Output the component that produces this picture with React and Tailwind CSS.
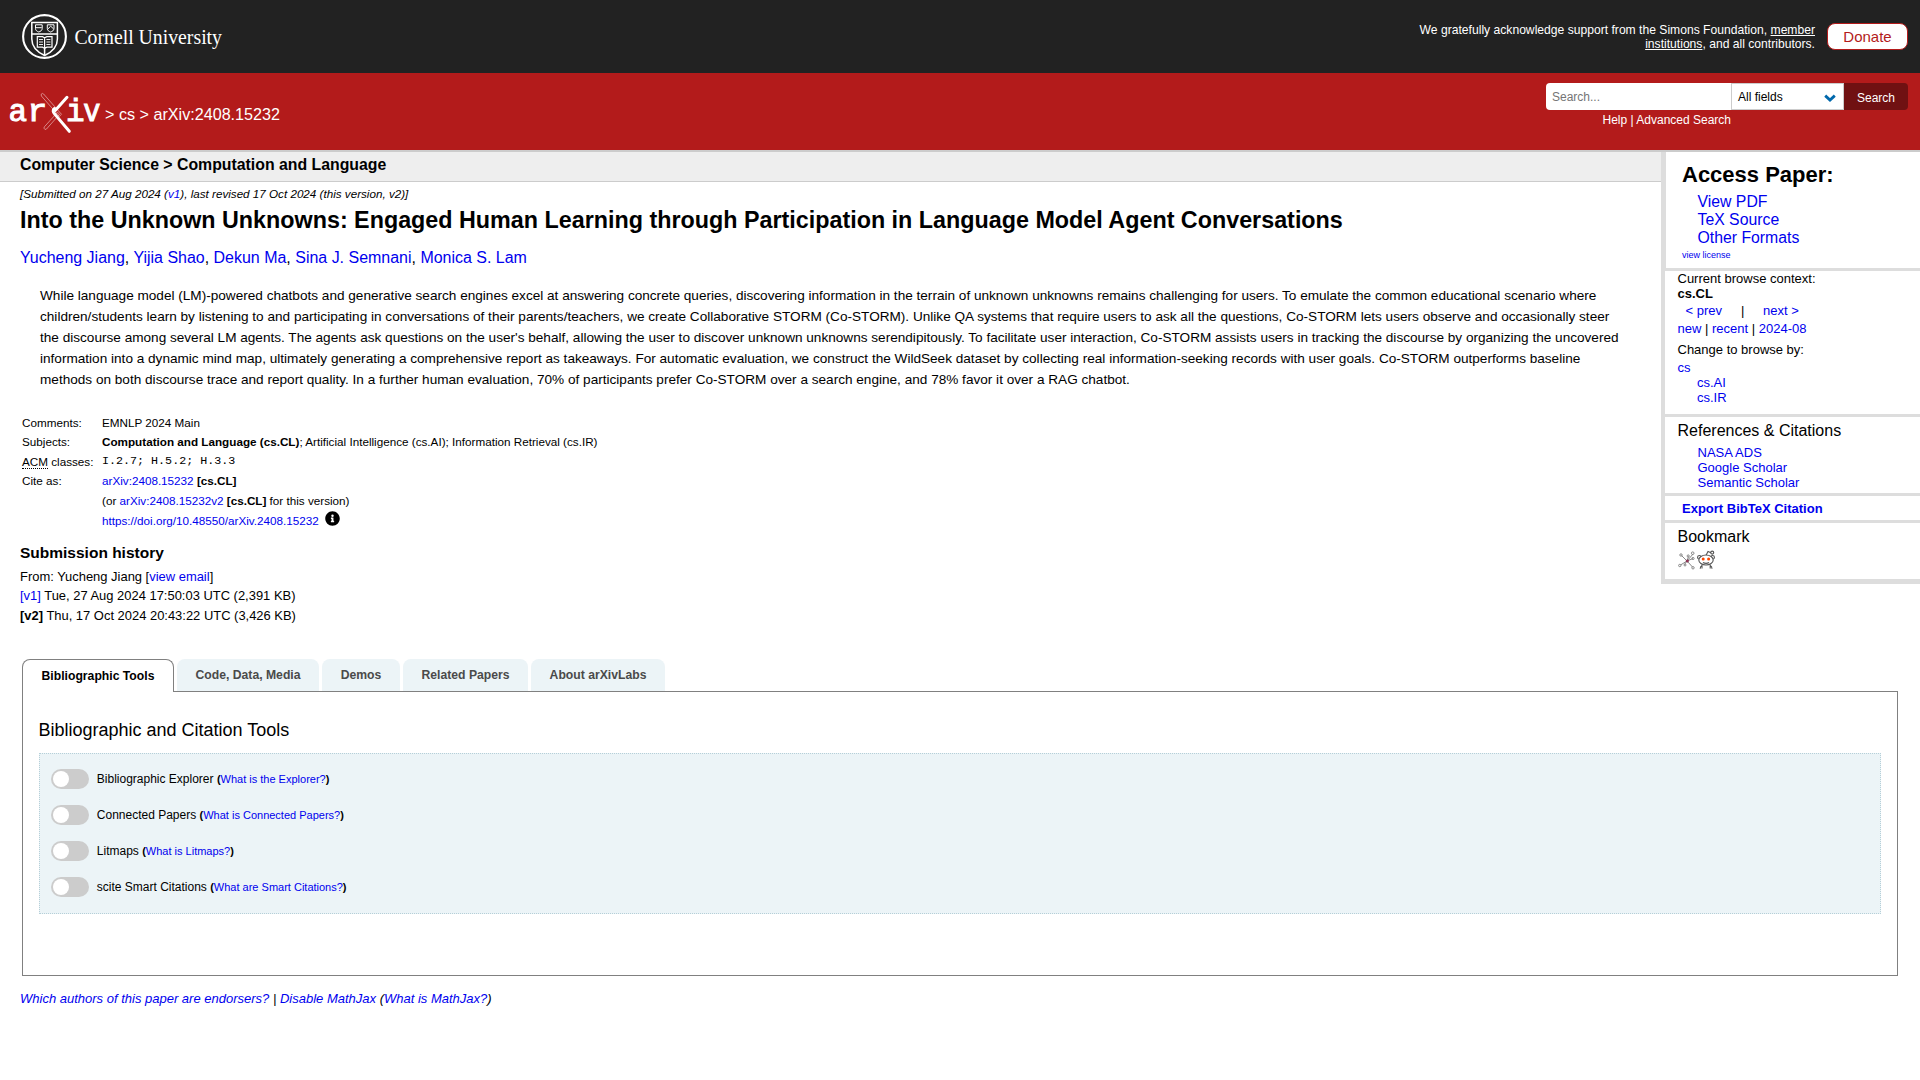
import React from "react";

const A = ({ children, className = "" }) => (
  <a href="#" className={"text-[#0000ee] " + className}>{children}</a>
);

const CornellLogo = () => (
  <svg width="204" height="50" viewBox="0 0 204 50" className="block overflow-visible">
    <g fill="none" stroke="#fff">
      <circle cx="22.5" cy="25.5" r="21.4" strokeWidth="2.1" />
      <path d="M9.8 11.5H35.4V28C35.4 36.5 29 41.5 22.6 44.5C16.2 41.5 9.8 36.5 9.8 28Z" strokeWidth="1.5" />
      <path d="M9.8 22.9H35.4M22.6 37V44" strokeWidth="1.5" />
      <path d="M13.5 13.8H20.2V17.5C20.2 19.6 18.3 20.4 16.8 21C15.2 20.4 13.5 19.6 13.5 17.5ZM25.3 13.8H32V17.5C32 19.6 30.2 20.4 28.6 21C27 20.4 25.3 19.6 25.3 17.5Z" strokeWidth="1" />
      <path d="M13.8 16.7H19.7M25.8 18L28.7 15.2L31.7 18" strokeWidth="1" />
      <path d="M15.3 25.7H20.5L22.6 26.8L24.9 25.7H30V36.2H24.9L22.6 37.4L20.5 36.2H15.3ZM22.6 26.8V37.4" strokeWidth="1.2" />
      <path d="M17 28.5H21M17 31H21M17 33.5H21M24.4 28.5H28.4M24.4 31H28.4M24.4 33.5H28.4" strokeWidth="0.9" />
    </g>
    <text x="52.4" y="32.5" fill="#fff" fontFamily="Liberation Serif, serif" fontSize="21.5" textLength="147.6" lengthAdjust="spacingAndGlyphs">Cornell University</text>
  </svg>
);

const ArxivLogo = () => (
  <svg width="92" height="42" viewBox="0 0 92 42" className="block overflow-visible">
    <g fill="#fff" stroke="#fff" strokeWidth="1" fontFamily="Liberation Mono, monospace" fontSize="31">
      <text x="-0.6" y="28.9" textLength="18.6" lengthAdjust="spacingAndGlyphs">a</text>
      <text x="18.4" y="28.9" textLength="19.8" lengthAdjust="spacingAndGlyphs">r</text>
      <text x="57" y="28.9">i</text>
      <text x="74.2" y="28.9" textLength="17.2" lengthAdjust="spacingAndGlyphs">v</text>
    </g>
    <path d="M32.2 2.2L33.6 1.4L34.6 2L52.5 22.3L50.4 24.4L32.4 4Z" fill="none" stroke="#e8b4b4" strokeWidth="0.7" />
    <path d="M36 37.5L34.9 36.1L35.4 34.8L48.5 20.3L50.6 22.2L37.5 37Z" fill="none" stroke="#e8b4b4" strokeWidth="0.7" />
    <path d="M58 5.3L46.2 18.4" stroke="#fff" strokeWidth="3" strokeLinecap="round" />
    <path d="M45.5 16.5C43.5 18 43.8 20 46 22.4L60.3 39.3" fill="none" stroke="#fff" strokeWidth="3" strokeLinecap="round" />
  </svg>
);

const Toggle = ({ label, link }) => (
  <div className="flex h-9 items-center">
    <span className="flex h-5 w-[38px] items-center rounded-full bg-[#ccc] pl-0.5">
      <span className="size-4 rounded-full bg-white" />
    </span>
    <span className="ml-[7.8px] text-xs leading-5">
      {label} <span className="text-[11px]"><b>(</b><A>{link}</A><b>)</b></span>
    </span>
  </div>
);

const tabs = ["Code, Data, Media", "Demos", "Related Papers", "About arXivLabs"];
const tabWidths = ["w-[142px]", "w-[78px]", "w-[125px]", "w-[134px]"];

const Header = () => (
  <header>
    <div className="flex h-[73px] items-start justify-between bg-[#222] pl-[22px] pr-3 text-white">
      <div className="pt-[11px]"><CornellLogo /></div>
      <div className="flex">
        <p className="mr-3 mt-[23px] w-[420px] text-right text-[12.13px] leading-[14px]">
          We gratefully acknowledge support from the Simons Foundation, <u>member institutions</u>, and all contributors.
        </p>
        <a href="#" className="mt-[23px] flex h-[27px] w-[81px] items-center justify-center rounded-lg border border-[#b31b1b] bg-white text-[15px] leading-[25px] text-[#b31b1b]">
          Donate
        </a>
      </div>
    </div>
    <div className="flex h-[79px] justify-between border-b-2 border-[#ccc] bg-[#b31b1b] pl-[9px] pr-3 text-white">
      <div className="flex">
        <div className="mt-[19px]"><ArxivLogo /></div>
        <div className="ml-1 mt-[32px] text-[16.15px] leading-[18px]">&gt; cs &gt; arXiv:2408.15232</div>
      </div>
      <div className="mt-[10px] w-[362px] text-xs">
        <div className="flex h-[27px]">
          <div className="w-[185px] rounded-l-sm bg-white pl-1.5 pt-px leading-[27px] text-[#757575]">Search...</div>
          <div className="flex w-[113px] items-center justify-between border border-[#ccc] bg-white pl-1.5 pr-[7px] text-black">
            <span className="pt-px leading-[25px]">All fields</span>
            <svg width="12" height="8" viewBox="0 0 12 8" className="mt-0.5"><path d="M1.2 1.6L6 6L10.8 1.6" fill="none" stroke="#0068ac" strokeWidth="2.8" /></svg>
          </div>
          <div className="w-16 rounded-r-sm bg-[#701112] pt-0.5 text-center leading-[27px]">Search</div>
        </div>
        <div className="pl-[56.5px] pt-px leading-[19px]">Help | Advanced Search</div>
      </div>
    </div>
  </header>
);

const Sidebar = () => (
  <aside className="h-[432px] w-[259px] border-b-[5px] border-l-4 border-[#ddd] text-[13px] leading-[15px]">
    <section className="h-[116px] border-l border-[#ddd] pl-4 pt-[10px]">
      <h2 className="text-[22px] font-bold leading-[26px]">Access Paper:</h2>
      <ul className="ml-[15.5px] mt-[5px] text-[15.8px] leading-[18px]">
        <li><A>View PDF</A></li><li><A>TeX Source</A></li><li><A>Other Formats</A></li>
      </ul>
      <div className="mt-[3px] text-[9px] leading-[10px]"><A>view license</A></div>
    </section>
    <section className="h-[146px] border-t-[3px] border-[#ddd] pl-[12.5px]">
      <div className="leading-[15px]">Current browse context:</div>
      <div className="font-bold leading-[15px]">cs.CL</div>
      <div className="mt-px flex leading-[17px]"><A className="ml-2 w-[55.5px]">&lt; prev</A><span className="w-[22px]">|</span><A>next &gt;</A></div>
      <div className="mt-px leading-[18px]"><A>new</A> | <A>recent</A> | <A>2024-08</A></div>
      <div className="mt-1 leading-[15px]">Change to browse by:</div>
      <div className="mt-[3px]"><A>cs</A></div>
      <div className="ml-[19.5px]"><A>cs.AI</A></div>
      <div className="ml-[19.5px]"><A>cs.IR</A></div>
    </section>
    <section className="h-[79px] border-t-[3px] border-[#ddd] pl-[12.5px] pt-[5px]">
      <h3 className="text-base leading-[18px]">References &amp; Citations</h3>
      <ul className="ml-5 mt-[5px]">
        <li><A>NASA ADS</A></li><li><A>Google Scholar</A></li><li><A>Semantic Scholar</A></li>
      </ul>
    </section>
    <section className="h-[27px] border-t-[3px] border-[#ddd] pl-[17px] pt-[5px] font-bold"><A>Export BibTeX Citation</A></section>
    <section className="h-[59px] border-t-[3px] border-[#ddd] pl-[12.5px] pt-[5px]">
      <h3 className="text-base leading-[18px]">Bookmark</h3>
      <div className="mt-1 flex gap-px">
        <svg width="18" height="20" viewBox="0 0 18 20" fill="none" stroke="#888" strokeWidth="1">
          <path d="M3.5 5.5L9 11L15 4M9 11L14.5 17M9 11L2.5 15M9 11L6.5 14.5M9 11L10.5 6.5M9 11L15 8.5" strokeWidth="1" />
          <circle cx="3" cy="5" r="1.2" /><circle cx="14.7" cy="3.2" r="1.3" /><circle cx="10.2" cy="6" r="1.1" /><circle cx="15" cy="8.5" r="1.1" />
          <circle cx="1.8" cy="15.5" r="1.2" /><circle cx="7" cy="15" r="1" /><circle cx="15" cy="17.8" r="1.2" />
          <circle cx="9.3" cy="11" r="1.1" fill="#b0305a" stroke="#803050" />
        </svg>
        <svg width="19" height="20" viewBox="0 0 19 20" fill="none" stroke="#555" strokeWidth="1.1">
          <ellipse cx="9" cy="10" rx="7.2" ry="5" fill="#fff" />
          <path d="M1.8 9C0 8.5 .3 5.6 2.2 5.5C3 5.4 3.6 6 3.8 6.5M16.2 9C18 8.5 17.7 5.6 15.8 5.5C15 5.4 14.4 6 14.2 6.5" />
          <path d="M9.2 5L11 1.5L14 2.7" /><circle cx="15.2" cy="2.6" r="1.5" />
          <path d="M6 12.5C8 13.6 10.2 13.6 12 12.5M5 14.5V18.5M13.2 14.5V18.5M3.2 18.8C3.2 16.8 4 16 5 15.5M15 18.8C15 16.8 14.2 16 13.2 15.5" />
          <circle cx="6.2" cy="9" r="1.5" fill="#ff4500" stroke="none" /><circle cx="11.6" cy="9" r="1.5" fill="#ff4500" stroke="none" />
        </svg>
      </div>
    </section>
  </aside>
);

const Row = ({ label, children }) => (
  <div className="flex h-[19.6px] items-center leading-[19px]">
    <div className="w-20">{label}</div>
    <div>{children}</div>
  </div>
);

const Article = () => (
  <main className="w-[1661px]">
    <div className="h-[30px] border-b border-[#ccc] bg-[#eee] pl-5 text-[15.84px] font-bold leading-[25px]">Computer Science &gt; Computation and Language</div>
    <div className="pl-5">
      <div className="text-[11.66px] italic leading-[24px]">[Submitted on 27 Aug 2024 (<A>v1</A>), last revised 17 Oct 2024 (this version, v2)]</div>
      <h1 className="whitespace-nowrap text-[23.32px] font-bold leading-[28px]">Into the Unknown Unknowns: Engaged Human Learning through Participation in Language Model Agent Conversations</h1>
      <div className="mt-[14px] text-[15.98px] leading-[19px]">
        <A>Yucheng Jiang</A>, <A>Yijia Shao</A>, <A>Dekun Ma</A>, <A>Sina J. Semnani</A>, <A>Monica S. Lam</A>
      </div>
      <div className="ml-5 mt-[18px] whitespace-nowrap text-[13.6px] leading-[21.08px]">
        While language model (LM)-powered chatbots and generative search engines excel at answering concrete queries, discovering information in the terrain of unknown unknowns remains challenging for users. To emulate the common educational scenario where<br />
        children/students learn by listening to and participating in conversations of their parents/teachers, we create Collaborative STORM (Co-STORM). Unlike QA systems that require users to ask all the questions, Co-STORM lets users observe and occasionally steer<br />
        the discourse among several LM agents. The agents ask questions on the user's behalf, allowing the user to discover unknown unknowns serendipitously. To facilitate user interaction, Co-STORM assists users in tracking the discourse by organizing the uncovered<br />
        information into a dynamic mind map, ultimately generating a comprehensive report as takeaways. For automatic evaluation, we construct the WildSeek dataset by collecting real information-seeking records with user goals. Co-STORM outperforms baseline<br />
        methods on both discourse trace and report quality. In a further human evaluation, 70% of participants prefer Co-STORM over a search engine, and 78% favor it over a RAG chatbot.
      </div>
      <div className="ml-0.5 mt-[22px] text-[11.7px]">
        <Row label="Comments:">EMNLP 2024 Main</Row>
        <Row label="Subjects:"><b>Computation and Language (cs.CL)</b>; Artificial Intelligence (cs.AI); Information Retrieval (cs.IR)</Row>
        <Row label={<><span className="border-b border-dotted border-black">ACM</span> classes:</>}><span className="block pb-px font-['Liberation_Mono',monospace] text-[11.7px] leading-[16px]">I.2.7; H.5.2; H.3.3</span></Row>
        <Row label="Cite as:"><A>arXiv:2408.15232</A> <b>[cs.CL]</b></Row>
        <Row label="">(or <A>arXiv:2408.15232v2</A> <b>[cs.CL]</b> for this version)</Row>
        <Row label="">
          <span className="flex items-center">
            <A>https://doi.org/10.48550/arXiv.2408.15232</A>
            <svg width="15" height="15" viewBox="0 0 512 512" className="mb-1 ml-1.5"><path d="M256 8C119 8 8 119 8 256s111 248 248 248 248-111 248-248S393 8 256 8zm0 110a42 42 0 1 1 0 84 42 42 0 0 1 0-84zm56 254c0 7-5 12-12 12h-88c-7 0-12-5-12-12v-24c0-7 5-12 12-12h12v-64h-12c-7 0-12-5-12-12v-24c0-7 5-12 12-12h64c7 0 12 5 12 12v100h12c7 0 12 5 12 12z" /></svg>
          </span>
        </Row>
      </div>
      <h2 className="mt-[13px] text-[15.5px] font-bold leading-[20px]">Submission history</h2>
      <div className="mt-1 text-[12.95px] leading-[19.5px]">
        From: Yucheng Jiang [<A>view email</A>]<br />
        <A>[v1]</A> Tue, 27 Aug 2024 17:50:03 UTC (2,391 KB)<br />
        <b>[v2]</b> Thu, 17 Oct 2024 20:43:22 UTC (3,426 KB)
      </div>
    </div>
  </main>
);

export default function App() {
  return (
    <div className="h-[1080px] w-[1920px] overflow-hidden bg-white font-['Liberation_Sans',Arial,sans-serif] text-black">
      <Header />
      <div className="flex h-[507px]">
        <Article />
        <Sidebar />
      </div>
      <div className="mx-[22px]">
        <div className="flex h-8 gap-[3px] text-[12.2px] font-bold">
          <div className="z-10 h-[33px] w-[152px] rounded-t-lg border border-b-0 border-[#808080] bg-white text-center leading-[32px]">Bibliographic Tools</div>
          {tabs.map((t, i) => (
            <div key={t} className={"rounded-t-lg bg-[#ecf4f7] text-center leading-[32px] text-[#4a4a4a] " + tabWidths[i]}>{t}</div>
          ))}
        </div>
        <div className="h-[285px] border border-[#808080] px-4 pt-[27px]">
          <h2 className="-ml-0.5 pl-[1.5px] text-[18px] leading-[22px]">Bibliographic and Citation Tools</h2>
          <div className="mt-[12px] h-[161px] border border-dotted border-[#b5cfd8] bg-[#ecf4f7] pl-[11px] pt-[7px]">
            <Toggle label="Bibliographic Explorer" link="What is the Explorer?" />
            <Toggle label="Connected Papers" link="What is Connected Papers?" />
            <Toggle label="Litmaps" link="What is Litmaps?" />
            <Toggle label="scite Smart Citations" link="What are Smart Citations?" />
          </div>
        </div>
      </div>
      <div className="ml-5 mt-[13px] text-[13px] italic leading-[20px]">
        <A>Which authors of this paper are endorsers?</A> | <A>Disable MathJax</A> (<A>What is MathJax?</A>)
      </div>
    </div>
  );
}
